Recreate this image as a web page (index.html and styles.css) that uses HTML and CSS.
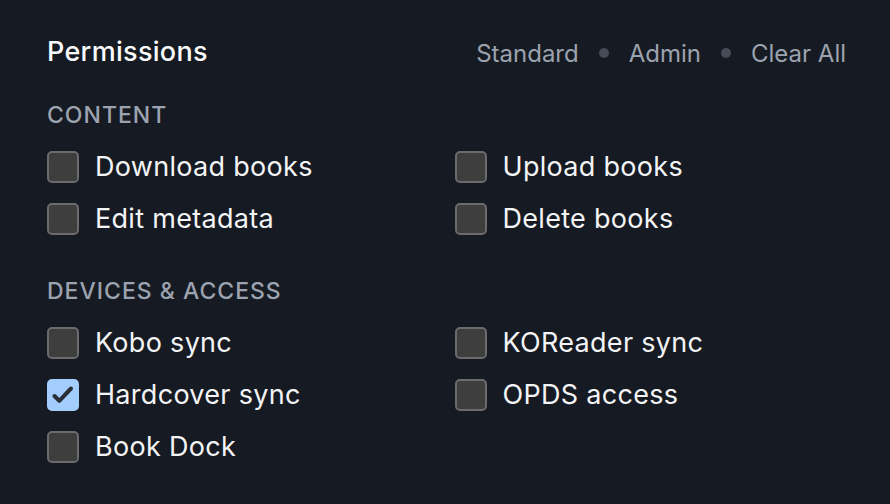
FILE: index.html
```html
<!DOCTYPE html>
<html lang="en">
<head>
    <meta charset="UTF-8">
    <meta name="viewport" content="width=device-width, initial-scale=1.0">
    <title>Permissions</title>
    <link rel="stylesheet" href="styles.css">
</head>
<body>

<!-- === Permissions panel === -->
<div class="perm-panel">
    <div class="perm-header">
        <h2>Permissions</h2>
        <div class="presets">
            <a href="#">Standard</a>
            <span class="dot"></span>
            <a href="#">Admin</a>
            <span class="dot"></span>
            <a href="#">Clear All</a>
        </div>
    </div>

    <section class="perm-group">
        <h3>Content</h3>
        <div class="perm-grid">
            <label class="perm"><input type="checkbox"><span class="box"></span>Download books</label>
            <label class="perm"><input type="checkbox"><span class="box"></span>Upload books</label>
            <label class="perm"><input type="checkbox"><span class="box"></span>Edit metadata</label>
            <label class="perm"><input type="checkbox"><span class="box"></span>Delete books</label>
        </div>
    </section>

    <section class="perm-group">
        <h3>Devices &amp; Access</h3>
        <div class="perm-grid">
            <label class="perm"><input type="checkbox"><span class="box"></span>Kobo sync</label>
            <label class="perm"><input type="checkbox"><span class="box"></span>KOReader sync</label>
            <label class="perm"><input type="checkbox" checked><span class="box">
                <svg viewBox="0 0 28 28" width="28" height="28"><path d="M5.5 15l4.8 4.8L22 7.5" fill="none" stroke="#2a2e35" stroke-width="4" stroke-linecap="round" stroke-linejoin="round"/></svg>
            </span>Hardcover sync</label>
            <label class="perm"><input type="checkbox"><span class="box"></span>OPDS access</label>
            <label class="perm"><input type="checkbox"><span class="box"></span>Book Dock</label>
        </div>
    </section>
</div>

</body>
</html>
```

FILE: styles.css
```css
/* === Page === */
body {
    margin: 0;
    background-color: #161a22;
    font-family: Inter, "Noto Sans", sans-serif;
    color: #f3f4f6;
}

.perm-panel {
    padding: 33px 44px 20px 47px;
}

/* === Header row === */
.perm-header {
    display: flex;
    align-items: center;
    justify-content: space-between;
}

.perm-header h2 {
    margin: 0;
    font-size: 27px;
    font-weight: 500;
    line-height: 38px;
    letter-spacing: 0.3px;
    color: #f9fafb;
}

.presets {
    display: flex;
    align-items: center;
    gap: 20px;
    padding-top: 2px;
}

.presets a {
    color: #9ca3af;
    text-decoration: none;
    font-size: 24px;
}

.presets .dot {
    width: 10px;
    height: 10px;
    border-radius: 50%;
    background-color: #474b55;
}

/* === Groups === */
.perm-group h3 {
    margin: 31px 0 23px;
    font-size: 23px;
    font-weight: 500;
    line-height: 26px;
    letter-spacing: 1px;
    text-transform: uppercase;
    color: #9ca3af;
}

.perm-group + .perm-group h3 {
    margin-top: 43px;
}

.perm-grid {
    display: grid;
    grid-template-columns: 1fr 1fr;
    column-gap: 16px;
    row-gap: 20px;
}

.perm {
    display: flex;
    align-items: center;
    gap: 16px;
    font-size: 27px;
    line-height: 32px;
    letter-spacing: 0.3px;
    color: #f3f4f6;
}

.perm input {
    display: none;
}

.perm .box {
    width: 28px;
    height: 28px;
    flex: none;
    display: flex;
    align-items: center;
    justify-content: center;
    border: 2px solid #6b6b6b;
    border-radius: 5px;
    background-color: #3e3e3e;
}

.perm .box svg {
    flex: none;
}

.perm input:checked + .box {
    border-color: #a3cdfd;
    background-color: #a3cdfd;
}
```
